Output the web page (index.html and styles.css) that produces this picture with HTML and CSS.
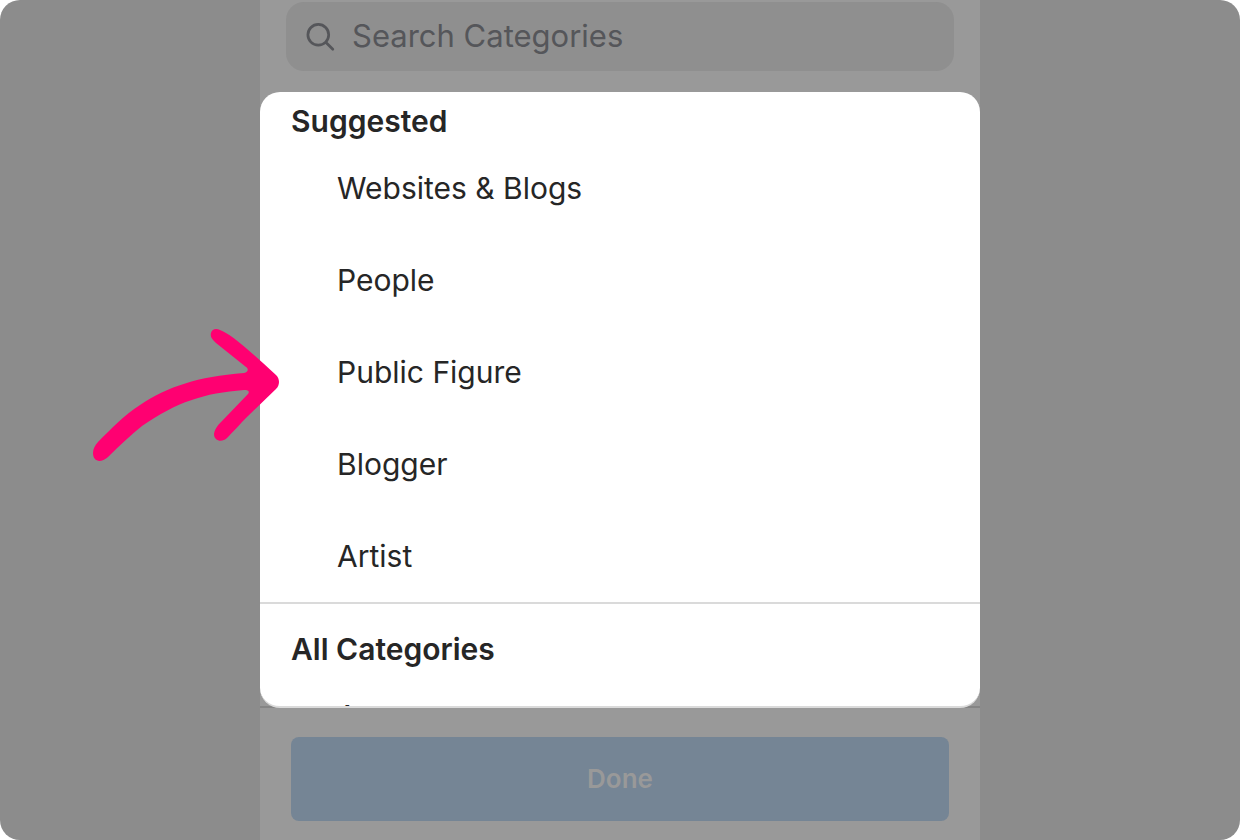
FILE: index.html
```html
<!DOCTYPE html>
<html lang="en">
<head>
<meta charset="utf-8">
<meta name="viewport" content="width=device-width, initial-scale=1">
<title>Categories</title>
<link rel="stylesheet" href="styles.css">
</head>
<body>
<div class="stage">
  <main class="screen">
    <label class="search">
      <svg class="search-icon" viewBox="0 0 30 30" aria-hidden="true">
        <circle cx="12.3" cy="12.8" r="10.4"/>
        <path d="M20 20.5 L26.8 27.3"/>
      </svg>
      <input class="search-input" type="search" placeholder="Search Categories" aria-label="Search Categories">
    </label>
    <div class="sheet-area">
      <div class="sheet">
        <section class="group">
          <h2 class="group-title">Suggested</h2>
          <ul class="list">
            <li><button class="item" type="button">Websites &amp; Blogs</button></li>
            <li><button class="item" type="button">People</button></li>
            <li><button class="item" type="button">Public Figure</button></li>
            <li><button class="item" type="button">Blogger</button></li>
            <li><button class="item" type="button">Artist</button></li>
          </ul>
        </section>
        <section class="group group-all">
          <h2 class="group-title">All Categories</h2>
          <ul class="list">
            <li><button class="item" type="button">Actor</button></li>
          </ul>
        </section>
      </div>
      <svg class="arrow" viewBox="0 0 220 170" aria-hidden="true">
        <path d="M13 143 C13 139 15 135 18 132 C31 119 44 105 60 95 C89 76 117 67 164 63 C168 62 169 59 166 57 L136 33 C132 29 130 27 131 23 C132 19 136 18 140 20 C149 23 167 38 196 65 C200 69 200 75 196 79 L168 106 C160 114 152 123 147 128 C142 133 134 131 134 124 C135 118 139 114 143 110 L168 84 C170 81 168 80 164 80 C124 83 97 92 62 116 C51 125 39 136 28 147 C20 154 13 151 13 143 Z"/>
      </svg>
    </div>
    <footer class="footer">
      <button class="done" type="button">Done</button>
    </footer>
  </main>
</div>
</body>
</html>
```
FILE: styles.css
```css
* {
  box-sizing: border-box;
}

body {
  margin: 0;
  background: #fff;
  font-family: Inter, "Liberation Sans", sans-serif;
  color: #262626;
}

.stage {
  display: flex;
  justify-content: center;
  height: 100vh;
  border-radius: 20px;
  background: #8c8c8c;
  overflow: hidden;
}

.screen {
  display: flex;
  flex-direction: column;
  width: 100%;
  max-width: 720px;
  padding-top: 2px;
  background: #999;
}

.search {
  display: flex;
  align-items: center;
  gap: 16px;
  margin: 0 26px 21px;
  padding: 0 20px;
  border-radius: 18px;
  background: #8f8f8f;
}

.search-icon {
  flex: none;
  width: 30px;
  height: 30px;
  fill: none;
  stroke: #55565a;
  stroke-width: 2.7;
  stroke-linecap: round;
}

.search-input {
  flex: 1;
  min-width: 0;
  height: 69px;
  padding: 0 0 3px;
  border: 0;
  outline: 0;
  background: transparent;
  color: #55565a;
  font: 400 31px/40px Inter, "Liberation Sans", sans-serif;
  appearance: none;
}

.search-input::placeholder {
  color: #55565a;
  opacity: 1;
}

.sheet-area {
  display: flex;
  flex: 1;
  min-height: 0;
  position: relative;
  background: linear-gradient(#858585, #858585) bottom / 100% 2px no-repeat;
}

.sheet {
  flex: 1;
  padding-top: 8px;
  border-bottom: 2px solid #dadada;
  border-radius: 20px;
  background: #fff;
  overflow: hidden;
}

.group-all {
  padding-top: 24px;
  border-top: 2px solid #dadada;
}

.group-title {
  margin: 0;
  padding: 0 31px;
  font-size: 30px;
  font-weight: 600;
  line-height: 42px;
}

.list {
  margin: 0;
  padding: 0;
  list-style: none;
}

.item {
  display: block;
  width: 100%;
  height: 92px;
  padding: 0 77px;
  border: 0;
  background: transparent;
  color: inherit;
  font: 400 30px/40px Inter, "Liberation Sans", sans-serif;
  text-align: left;
}

.arrow {
  position: absolute;
  top: 218px;
  left: -180px;
  width: 220px;
  height: 170px;
  fill: #ff0071;
  pointer-events: none;
}

.footer {
  padding: 29px 31px 19px;
}

.done {
  display: block;
  width: 100%;
  height: 84px;
  border: 0;
  border-radius: 8px;
  background: #758595;
  color: #999;
  font: 600 26px/32px Inter, "Liberation Sans", sans-serif;
}
```
